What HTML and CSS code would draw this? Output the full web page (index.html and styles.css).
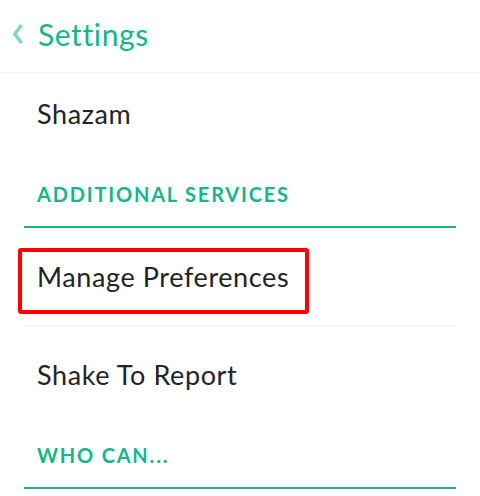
FILE: index.html
```html
<!DOCTYPE html>
<html lang="en">
  <head>
    <meta charset="utf-8">
    <title>Settings</title>
    <link rel="stylesheet" href="styles.css">
  </head>
  <body>

  <div class="topbar">
    <svg class="back" width="14" height="24" viewBox="0 0 14 24">
      <path d="M10.5 3 L4 12 L10.5 21" fill="none" stroke="#84d6c2" stroke-width="3.6" stroke-linejoin="miter"/>
    </svg>
    <span class="title">Settings</span>
  </div>

  <div class="scroll">
    <ul class="list">
      <li class="item first last">Shazam</li>
      <li class="section">ADDITIONAL SERVICES</li>
      <li class="item">
        Manage Preferences
        <div class="highlight"></div>
      </li>
      <li class="item last">Shake To Report</li>
      <li class="section">WHO CAN...</li>
    </ul>
  </div>

  </body>
</html>
```

FILE: styles.css
```css
html {
  height: 100%;
}
body {
  margin: 0;
  padding: 0;
  background: #ffffff;
  color: #222326;
  font-family: "Lato", "Noto Sans", sans-serif;
  height: 100%;
  overflow: hidden;
}

.topbar {
  height: 72px;
  box-sizing: border-box;
  display: flex;
  align-items: center;
  padding-left: 11px;
  padding-bottom: 4px;
  border-bottom: 1px solid #f3f3f3;
  height: 73px;
}

.back {
  margin-right: 13px;
}

.title {
  font-size: 30px;
  letter-spacing: 0.6px;
  color: #14b68a;
}

.scroll {
  overflow: hidden;
}

.list {
  list-style: none;
  margin: 0 24px;
  padding: 0;
}

.item {
  position: relative;
  height: 97px;
  display: flex;
  align-items: center;
  padding-left: 13px;
  font-size: 27px;
  letter-spacing: 0.6px;
  border-bottom: 1px solid #f3f3f3;
}
.item.first {
  height: 89px;
  padding-bottom: 8px;
  box-sizing: border-box;
}
.item.last {
  border-bottom: none;
}

.section {
  height: 66px;
  box-sizing: border-box;
  display: flex;
  align-items: flex-end;
  padding-left: 13px;
  padding-bottom: 20px;
  font-size: 20px;
  font-weight: 700;
  letter-spacing: 1.8px;
  color: #14b68a;
  border-bottom: 2px solid #14b68a;
}

.highlight {
  position: absolute;
  left: -6px;
  top: 20px;
  width: 283px;
  height: 58px;
  border: 4px solid #ff0000;
  border-radius: 3px;
}
```
